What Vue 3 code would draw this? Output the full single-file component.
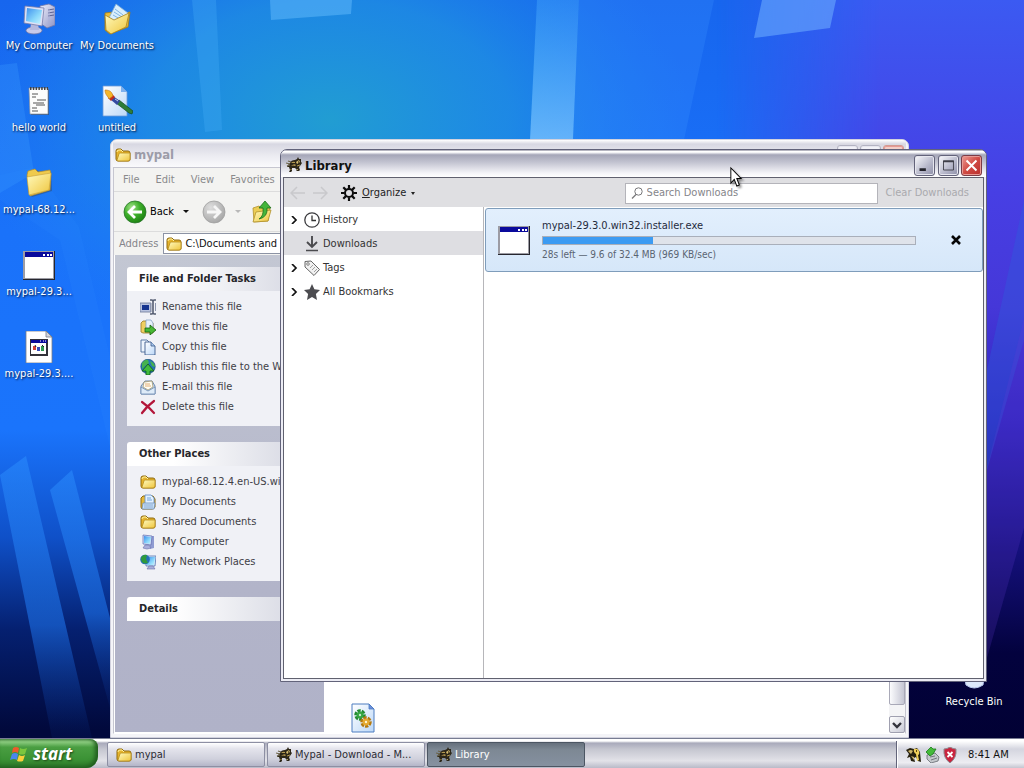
<script setup>
const desktopItems = [
  { label: 'My Computer', icon: 'computer' },
  { label: 'hello world', icon: 'notepad' },
  { label: 'mypal-68.12...', icon: 'folder-big' },
  { label: 'mypal-29.3...', icon: 'program' },
  { label: 'mypal-29.3....', icon: 'installer' },
  { label: 'My Documents', icon: 'documents' },
  { label: 'untitled', icon: 'paint' },
]

const menus = ['File', 'Edit', 'View', 'Favorites']

const panels = [
  {
    title: 'File and Folder Tasks',
    links: [
      { label: 'Rename this file', icon: 'rename' },
      { label: 'Move this file', icon: 'move' },
      { label: 'Copy this file', icon: 'copy' },
      { label: 'Publish this file to the Web', icon: 'publish' },
      { label: 'E-mail this file', icon: 'mail' },
      { label: 'Delete this file', icon: 'delete' },
    ],
  },
  {
    title: 'Other Places',
    links: [
      { label: 'mypal-68.12.4.en-US.win32', icon: 'folder' },
      { label: 'My Documents', icon: 'folder-doc' },
      { label: 'Shared Documents', icon: 'folder' },
      { label: 'My Computer', icon: 'monitor' },
      { label: 'My Network Places', icon: 'network' },
    ],
  },
  { title: 'Details', links: [] },
]

const tree = [
  { label: 'History', icon: 'clock', open: true },
  { label: 'Downloads', icon: 'download', selected: true },
  { label: 'Tags', icon: 'tag', open: true },
  { label: 'All Bookmarks', icon: 'star', open: true },
]

const tasks = [
  { label: 'mypal', icon: 'folder' },
  { label: 'Mypal - Download - M...', icon: 'mypal' },
  { label: 'Library', icon: 'mypal', active: true },
]

const tray = ['tray-key', 'tray-eject', 'tray-shield']
</script>

<template>
  <svg class="defs" aria-hidden="true">
    <defs>
      <linearGradient id="gFolder" x1="0" y1="0" x2="1" y2="1">
        <stop offset="0" stop-color="#fffbc0" /><stop offset="1" stop-color="#efc53c" />
      </linearGradient>
      <linearGradient id="gScreen" x1="0" y1="0" x2="1" y2="1">
        <stop offset="0" stop-color="#3d8fee" /><stop offset=".6" stop-color="#8ad8fb" /><stop offset="1" stop-color="#c9f3ff" />
      </linearGradient>
      <linearGradient id="gCase" x1="0" y1="0" x2="1" y2="1">
        <stop offset="0" stop-color="#f0f0fc" /><stop offset="1" stop-color="#8d93c4" />
      </linearGradient>
      <linearGradient id="gPaper" x1="0" y1="0" x2="1" y2="1">
        <stop offset="0" stop-color="#ffffff" /><stop offset="1" stop-color="#bcd8f8" />
      </linearGradient>
      <radialGradient id="gGreen" cx=".35" cy=".3" r=".8">
        <stop offset="0" stop-color="#a5e38c" /><stop offset=".45" stop-color="#3fb02c" /><stop offset="1" stop-color="#167a0d" />
      </radialGradient>
      <radialGradient id="gGray" cx=".35" cy=".3" r=".8">
        <stop offset="0" stop-color="#dedede" /><stop offset="1" stop-color="#a2a2a2" />
      </radialGradient>
    </defs>

    <symbol id="computer" viewBox="0 0 32 32">
      <path d="M17 3l9-2 6 3v18l-8 3-7-5z" fill="url(#gCase)" stroke="#7378a8" stroke-width=".8" />
      <path d="M25 7l6-1M25 10l6-1M25 13l6-1" stroke="#5d6392" />
      <path d="M26 6v17" stroke="#a9aed8" stroke-width=".8" />
      <ellipse cx="11" cy="27.500" rx="8" ry="3.500" fill="#c9cbea" stroke="#7277a6" stroke-width=".8" />
      <path d="M8 21h7l1 6H7z" fill="#b5b9de" />
      <path d="M2 3l19 2-2 18L1 20z" fill="#dfe1f6" stroke="#777ca9" stroke-width=".8" />
      <path d="M4 5l15 2-2 14L3 18z" fill="url(#gScreen)" />
    </symbol>

    <symbol id="documents" viewBox="0 0 32 32">
      <path d="M4 10l8-1 2 3 15-3-2 15-18 7-5-4z" fill="#e9bd39" stroke="#a37c17" stroke-width=".8" />
      <path d="M15 1l12 9-6 12-13-7z" fill="#d9eefc" stroke="#7ba9d3" stroke-width=".8" />
      <path d="M14 6l8 6M13 9l8 5M12 12l7 4" stroke="#7fb4e4" />
      <path d="M4 12l9 5 15-7-3 14-15 7-5-4z" fill="url(#gFolder)" stroke="#a8811d" stroke-width=".8" />
    </symbol>

    <symbol id="notepad" viewBox="0 0 32 32">
      <path d="M8 4h18v26H8z" fill="#3c4355" opacity=".6" />
      <path d="M6 3h19v26H7z" fill="#fcfcfc" stroke="#8b8f98" stroke-width=".7" />
      <path d="M7 3.500h18" stroke="#444" stroke-width="3" stroke-dasharray="1.500 1.300" />
      <path d="M9 9h6M9 12h4M14 15h9M10 18h11M13 20h9M9 23h5M9 26h6" stroke="#555" stroke-width="1" />
    </symbol>

    <symbol id="paint" viewBox="0 0 32 32">
      <path d="M2 1h18l6 6v24H2z" fill="url(#gPaper)" stroke="#6d9bd8" stroke-width=".8" />
      <path d="M20 1v6h6z" fill="#7db0ee" />
      <path d="M18 15l14 11-1 3-3-1-13-10z" fill="#2e7d37" stroke="#174b1f" stroke-width=".7" />
      <path d="M12 11l7 5-3 4-7-6z" fill="#3449a0" />
      <path d="M14 14l3 2" stroke="#c3cdf0" />
      <path d="M10 8l4 4-4 4-3-3z" fill="#c22b20" />
      <path d="M4 5c5 0 7 2 8 6l-4 3c-1-3-4-4-4-9z" fill="#f5b62a" stroke="#c27316" stroke-width=".6" />
    </symbol>

    <symbol id="folder-big" viewBox="0 0 32 32">
      <path d="M5 6l9-3 3 3 11-1 1 19-20 6-4-5z" fill="#3b3e44" opacity=".4" />
      <path d="M4 8l1-4 7-2 3 3 12-2 1 4-1 16-20 6z" fill="#efca4d" stroke="#b48d27" stroke-width=".7" />
      <path d="M4 10l24-4-2 17-20 5z" fill="url(#gFolder)" stroke="#c6a03c" stroke-width=".6" />
    </symbol>

    <symbol id="program" viewBox="0 0 32 32">
      <path d="M0 2h32v29H0z" fill="#26262e" />
      <path d="M0 2h31v28H0z" fill="#9c9ca4" />
      <path d="M2 4h28v25H2z" fill="#fff" />
      <path d="M2 3h28v5H2z" fill="#0a0a9c" />
      <path d="M20 5h2v2h-2zM24 5h2v2h-2zM27 5h2v2h-2z" fill="#fff" />
    </symbol>

    <symbol id="installer" viewBox="0 0 32 32">
      <path d="M3 0h20l6 6v26H3z" fill="#fff" stroke="#777b86" stroke-width=".8" />
      <path d="M23 0v6h6z" fill="#d2d4dc" stroke="#777b86" stroke-width=".8" />
      <path d="M7 8h18v17H7z" fill="#32323a" />
      <path d="M8 12h15v11H8z" fill="#fff" />
      <path d="M8 9h16v3H8z" fill="#0a0a9c" />
      <path d="M17 10h1M20 10h1M22 10h1" stroke="#fff" />
      <path d="M10 15h3v4h-3z" fill="#d2403a" /><path d="M14 16h3v4h-3z" fill="#344ab8" /><path d="M18 15h3v5h-3z" fill="#2f9a54" />
      <path d="M12 14l1 2M19 14l2 2" stroke="#222" />
    </symbol>

    <symbol id="bin" viewBox="0 0 32 32">
      <path d="M4 4h24l-3 22q-9 6-17 0z" fill="#dce8fb" stroke="#b9c9ee" />
      <path d="M9 8l2 14M16 8v14M23 8l-2 14" stroke="#a4b7e4" />
    </symbol>

    <symbol id="folder" viewBox="0 0 16 16">
      <path d="M1 12V4q0-2 2-2h3l2 2h5q2 0 2 2v7q0 1-2 1H3q-2 0-2-2z" fill="#e5b32c" stroke="#8f6a0f" />
      <path d="M4 7q0-1 1-1h10v6q0 2-2 2H3q-1 0-1-1z" fill="url(#gFolder)" stroke="#b78d1c" stroke-width=".8" />
      <path d="M2 5q0-2 2-2h2l2 2" fill="none" stroke="#fff2a0" />
    </symbol>

    <symbol id="folder-doc" viewBox="0 0 16 16">
      <path d="M1 13V4l2-2h10l2 3v8q-1 2-3 2H3q-2 0-2-2z" fill="#e7b93a" stroke="#8f6a0f" />
      <path d="M5 1h6l3 3v7H5z" fill="#e3f1ff" stroke="#5a8cc8" stroke-width=".8" />
      <path d="M7 4h4M7 6h5" stroke="#72a5dc" />
      <path d="M3 9h12l-1 6H2z" fill="#c9e1fa" stroke="#6f8fb8" stroke-width=".8" />
      <path d="M4 11h9M4 13h9" stroke="#7e9fc6" stroke-width=".8" />
    </symbol>

    <symbol id="monitor" viewBox="0 0 16 16">
      <path d="M9 2h5v12l-4 1z" fill="#8f9bd2" />
      <path d="M3 1l9 1-1 9-8-1z" fill="#d4daf4" stroke="#5d6cb0" stroke-width=".7" />
      <path d="M4 2l7 1-1 7-6-1z" fill="url(#gScreen)" />
      <path d="M5 11h4l2 3-4 1-4-1z" fill="#a8aedb" stroke="#6a6fa8" stroke-width=".6" />
    </symbol>

    <symbol id="network" viewBox="0 0 16 16">
      <path d="M6 2h10l-1 10H6z" fill="#d7ecfb" stroke="#3f5fa8" stroke-width=".7" />
      <path d="M7 3h8l-1 8H7z" fill="url(#gScreen)" />
      <circle cx="5" cy="5.500" r="4.800" fill="#2470b8" />
      <path d="M1 4q2-4 6-3l-1 4 2 4q-7 2-7-5z" fill="#2f9a3c" />
      <path d="M9 12h4l2 3H7z" fill="#a8aedb" stroke="#6a6fa8" stroke-width=".6" />
    </symbol>

    <symbol id="rename" viewBox="0 0 16 16">
      <path d="M0 4h11v9H0z" fill="#b9c3df" stroke="#6b7796" stroke-width=".8" />
      <path d="M2 6h7v5H2z" fill="#16348f" />
      <path d="M10 1h2l1 1 1-1h2M10 15h2l1-1 1 1h2M13 2v12" fill="none" stroke="#555d72" stroke-width="1.600" />
      <path d="M10.500 4v8M15.500 4v8" stroke="#8c95ae" stroke-width="1" />
    </symbol>

    <symbol id="move" viewBox="0 0 16 16">
      <path d="M1 13V4l2-2h4l1 2h5v10H3z" fill="#efcf61" stroke="#9a7a24" stroke-width=".8" />
      <path d="M6 1h5l2 3v6H6z" fill="#e7f1fb" stroke="#7d9cc4" stroke-width=".7" />
      <path d="M5 9h5V6l6 5-6 5v-3H5z" fill="#48b835" stroke="#14620f" stroke-width=".8" />
    </symbol>

    <symbol id="copy" viewBox="0 0 16 16">
      <path d="M1 1h6l3 3v9H1z" fill="#eef5fd" stroke="#4f6f9c" stroke-width=".9" />
      <path d="M5 3h6l4 4v9H5z" fill="url(#gPaper)" stroke="#3c5c8c" stroke-width=".9" />
      <path d="M11 3v4h4" fill="#a5c4ea" stroke="#3c5c8c" stroke-width=".8" />
    </symbol>

    <symbol id="publish" viewBox="0 0 16 16">
      <circle cx="8" cy="7.500" r="7.200" fill="#2576b4" stroke="#154a7c" stroke-width=".7" />
      <path d="M2 4q3-4 6-3l1 3-4 3-3 3zM10 2q5 2 5 6l-3-1z" fill="#46b24e" />
      <path d="M8 5l6 7h-4v4H6v-4H2z" fill="#42bb3b" stroke="#0e5a17" stroke-width=".8" />
    </symbol>

    <symbol id="mail" viewBox="0 0 16 16">
      <path d="M1 7l4-5h7l3 5v8H1z" fill="#c8dcf2" stroke="#5f7ea6" stroke-width=".9" />
      <path d="M4 3l8-1 1 6-5 3-5-3z" fill="#fffdf2" stroke="#9c8e5e" stroke-width=".7" />
      <path d="M5 5h5M5 7h6" stroke="#d99b57" stroke-width=".8" />
      <path d="M1 8l7 4 7-4v7H1z" fill="#deebf8" stroke="#6a89b0" stroke-width=".8" />
    </symbol>

    <symbol id="delete" viewBox="0 0 16 16">
      <path d="M2 3q6 4 12 11M14 2Q7 7 2 14" fill="none" stroke="#b3163a" stroke-width="2.200" stroke-linecap="round" />
    </symbol>

    <symbol id="back" viewBox="0 0 24 24">
      <circle cx="12" cy="12" r="11" fill="url(#gGreen)" stroke="#28752a" stroke-width=".8" />
      <path d="M12 6l-6 6 6 6M6 12h13" fill="none" stroke="#fff" stroke-width="2.800" />
    </symbol>
    <symbol id="forward" viewBox="0 0 24 24">
      <circle cx="12" cy="12" r="11" fill="url(#gGray)" stroke="#a0a0a0" stroke-width=".8" />
      <path d="M12 6l6 6-6 6M18 12H5" fill="none" stroke="#f6f6f6" stroke-width="2.800" />
    </symbol>
    <symbol id="up" viewBox="0 0 20 24">
      <path d="M1 8l6-2 2 2 9-1-2 14-14 1z" fill="#eccd54" stroke="#b1922c" stroke-width=".8" />
      <path d="M1 22L4 12l15-2-3 11z" fill="url(#gFolder)" stroke="#b1922c" stroke-width=".8" />
      <path d="M7 19q5-3 4-11H7l6-7 6 7h-4q1 9-8 11z" fill="#45b53b" stroke="#1a6e19" stroke-width=".8" />
    </symbol>

    <symbol id="mypal" viewBox="0 0 16 16">
      <path d="M4 6q1-3 5-3l2-1 1-2 1 2 2 0 0 3 1 1-2 3-1 1 1 3-1 1h-3l1-1-2-2-3 0 0 3-1 1H3l1-2-1-3-2 0 1-2z" fill="#2c2617" />
      <path d="M2 4l3 1M0 6l4 1M1 9l3-1" stroke="#6b6248" stroke-width="1.200" />
      <path d="M5 6q2-2 4-1l0 1zM5 9q3-3 5-1l-1 1q-2-1-4 0z" fill="#b59a50" />
      <path d="M10 5l3-2 1 2-3 2z" fill="#d5bb6d" />
      <path d="M11 9l3-1M5 12l0 1M11 12l1 1" stroke="#b59a50" />
      <path d="M12 5h1" stroke="#000" />
    </symbol>

    <symbol id="gear" viewBox="0 0 16 16">
      <circle cx="8" cy="8" r="4" fill="none" stroke="#0c0c0c" stroke-width="2" />
      <path d="M8 0v3.500M8 12.500V16M0 8h3.500M12.500 8H16M2.300 2.300l2.600 2.600M11.100 11.100l2.600 2.600M13.700 2.300l-2.600 2.600M4.900 11.100l-2.600 2.600" stroke="#0c0c0c" stroke-width="2.200" />
    </symbol>

    <symbol id="clock" viewBox="0 0 16 16">
      <circle cx="8" cy="8" r="7.200" fill="#fff" stroke="#3d3d40" stroke-width="1.300" />
      <path d="M8 3.500V8.500h4" fill="none" stroke="#333" stroke-width="1.300" />
    </symbol>
    <symbol id="download" viewBox="0 0 16 16">
      <path d="M8 0v11M3 6l5 5 5-5" fill="none" stroke="#4a4a4e" stroke-width="1.900" />
      <path d="M2 14.500h12" stroke="#4a4a4e" stroke-width="1.400" />
    </symbol>
    <symbol id="tag" viewBox="0 0 16 16">
      <path d="M1 1.500l6-.5 8.500 8.500-5.500 6L1 7z" fill="#f1f1f1" stroke="#666" stroke-width="1" stroke-linejoin="round" />
      <circle cx="4" cy="4" r="1.300" fill="#fff" stroke="#666" stroke-width=".8" />
      <path d="M6 8l3-3M8 10l3-3M10 12l3-3" stroke="#999" stroke-width=".9" />
    </symbol>
    <symbol id="star" viewBox="0 0 16 16">
      <path d="M8 0l2.400 5.300 5.600.7-4.100 4 1.100 6L8 13l-5 3 1.100-6L0 6l5.600-.7z" fill="#4c4c50" />
    </symbol>

    <symbol id="dll" viewBox="0 0 24 30">
      <path d="M1 1h17l5 5v23H1z" fill="url(#gPaper)" stroke="#4d7cc0" />
      <path d="M18 1v5h5z" fill="#6c8fdc" stroke="#4d7cc0" stroke-width=".8" />
      <circle cx="9" cy="12" r="4" fill="none" stroke="#238a32" stroke-width="3.500" stroke-dasharray="3 1" />
      <circle cx="9" cy="12" r="3.500" fill="#35a541" /><circle cx="9" cy="12" r="1.200" fill="#c8eacd" />
      <circle cx="15" cy="19" r="4" fill="none" stroke="#b5790e" stroke-width="3.500" stroke-dasharray="3 1" />
      <circle cx="15" cy="19" r="3.500" fill="#e5a92f" /><circle cx="15" cy="19" r="1.200" fill="#fff4d0" />
    </symbol>

    <symbol id="flag" viewBox="0 0 18 18">
      <path d="M3 3q3-2 6 0L8 8Q5 6 2 8z" fill="#ee5a2c" />
      <path d="M10 3q3 2 7 0l-2 6q-3 1-6 0z" fill="#7cc63e" />
      <path d="M2 9q3-2 6 0l-1 6q-3-2-7 0z" fill="#4a86ee" />
      <path d="M9 10q3 2 6 0l-2 6q-3 1-6 0z" fill="#fbcf3a" />
    </symbol>

    <symbol id="tray-key" viewBox="0 0 16 16">
      <path d="M0 3l4-2 4 1 3-1 3 4 1 10-3-1-2-4-2 1 1 4-4-1-1-4-3 1 2-4z" fill="#26200f" />
      <path d="M8 2q4-1 5 2t-1 4l1 5-2 1-1-7q-3-2-2-5z" fill="#f0cf58" />
      <path d="M2 4q3-2 5 0L5 7zM5 9l3 1v3z" fill="#cbb46a" />
      <path d="M10 3h1v2h-1z" fill="#5c4510" />
    </symbol>
    <symbol id="tray-eject" viewBox="0 0 16 16">
      <path d="M3 8l8-2 4 4-1 4-7 2-4-4z" fill="#c4c8cc" stroke="#63686e" stroke-width=".8" />
      <path d="M6 10l5-1M7 13l6-2" stroke="#73797f" />
      <path d="M2 5l5-5 2 2 3 0-3 5-3 2z" fill="#44bb3a" stroke="#1b7a1b" stroke-width=".8" />
    </symbol>
    <symbol id="tray-shield" viewBox="0 0 16 16">
      <path d="M8 0q3 2 6 2 1 9-6 14Q1 11 2 2q3 0 6-2z" fill="#c9243e" stroke="#8f8a90" />
      <path d="M5.500 5l5 5M10.500 5l-5 5" stroke="#fff" stroke-width="1.800" />
    </symbol>
  </svg>

  <div class="screen">
    <main class="desktop">
      <svg class="wallpaper" viewBox="0 0 1024 768" preserveAspectRatio="none" aria-hidden="true">
        <defs>
          <linearGradient id="wBase" x1="0" y1="0" x2="0" y2="1">
            <stop offset="0" stop-color="#1766ee" /><stop offset=".3" stop-color="#1a72fa" />
            <stop offset=".56" stop-color="#1a74fc" /><stop offset=".7" stop-color="#0f50c8" />
            <stop offset=".82" stop-color="#052070" /><stop offset=".95" stop-color="#01093c" />
          </linearGradient>
          <radialGradient id="wTeal"><stop offset="0" stop-color="#219dd2" /><stop offset=".5" stop-color="#1f92e0" stop-opacity=".75" /><stop offset="1" stop-color="#1c82ee" stop-opacity="0" /></radialGradient>
          <linearGradient id="wRight" x1="0" y1="0" x2="0" y2="1">
            <stop offset="0" stop-color="#3b5af2" /><stop offset=".25" stop-color="#473fe4" />
            <stop offset=".4" stop-color="#4537d8" /><stop offset=".55" stop-color="#3026c0" />
            <stop offset=".7" stop-color="#171284" /><stop offset=".85" stop-color="#03023e" /><stop offset="1" stop-color="#010130" />
          </linearGradient>
          <linearGradient id="wMask" x1="0" y1="0" x2="1" y2="0">
            <stop offset=".7" stop-color="#000" /><stop offset=".86" stop-color="#fff" />
          </linearGradient>
          <mask id="rightMask"><rect width="1024" height="768" fill="url(#wMask)" /></mask>
          <linearGradient id="wBeam" x1="0" y1="0" x2="0" y2="1">
            <stop offset="0" stop-color="#4db1ff" stop-opacity=".35" /><stop offset="1" stop-color="#7cc4ff" stop-opacity=".75" />
          </linearGradient>
          <linearGradient id="wLow" x1="0" y1="0" x2="0" y2="1">
            <stop offset="0" stop-color="#2d90ff" stop-opacity=".5" /><stop offset=".6" stop-color="#1d72ea" stop-opacity=".6" /><stop offset="1" stop-color="#0c3a9c" stop-opacity=".1" />
          </linearGradient>
        </defs>
        <rect width="1024" height="768" fill="url(#wBase)" />
        <ellipse cx="330" cy="120" rx="360" ry="240" fill="url(#wTeal)" />
        <rect width="1024" height="768" fill="url(#wRight)" mask="url(#rightMask)" />
        <path d="M0 65l17-2 17 110-34 20z" fill="#3b9bff" opacity=".3" />
        <path d="M0 175l34-8 45 60 31 130v90L60 240 0 200z" fill="#2f8dff" opacity=".15" />
        <path d="M192 0h24l6 130-17 2z" fill="#49b0fa" opacity=".3" />
        <path d="M270 0h82l-1 14-80 6z" fill="#6cc0ff" opacity=".45" />
        <path d="M537 0h42l-6 140h-43z" fill="url(#wBeam)" />
        <path d="M579 0h135l-30 140h-111z" fill="#3b92ff" opacity=".25" />
        <path d="M762 0h74l-6 28-76 10z" fill="#71b0ff" opacity=".55" />
        <path d="M1024 200l-37 170v100l37-130z" fill="#2b62dc" opacity=".35" />
        <path d="M1024 318l-37 150v190l37-130z" fill="#6a3cd8" opacity=".2" />
        <path d="M0 475l26-19 66 282H52z" fill="url(#wLow)" />
        <path d="M50 490l22-20 38 148v90z" fill="url(#wLow)" />
      </svg>

      <div class="shortcuts">
        <button v-for="item in desktopItems" :key="item.label" class="shortcut" type="button">
          <svg class="icon32"><use :href="'#' + item.icon" /></svg>
          <span>{{ item.label }}</span>
        </button>
      </div>
      <button class="shortcut recycle" type="button">
        <svg class="icon32"><use href="#bin" /></svg>
        <span>Recycle Bin</span>
      </button>

      <section class="window explorer" aria-label="mypal">
        <header class="titlebar">
          <svg class="icon16"><use href="#folder" /></svg>
          <h2>mypal</h2>
          <div class="controls">
            <button type="button" aria-label="Minimize folder"></button>
            <button type="button" aria-label="Maximize folder"></button>
            <button type="button" class="close" aria-label="Close folder"></button>
          </div>
        </header>
        <div class="explorer-body">
          <nav class="menubar">
            <button v-for="m in menus" :key="m" type="button">{{ m }}</button>
          </nav>
          <div class="toolbar">
            <button type="button" class="tool"><svg class="icon24"><use href="#back" /></svg>Back</button>
            <span class="caret"></span>
            <button type="button" class="tool next" aria-label="Forward"><svg class="icon24"><use href="#forward" /></svg></button>
            <span class="caret dim"></span>
            <button type="button" class="tool upper" aria-label="Up"><svg class="icon-up"><use href="#up" /></svg></button>
          </div>
          <div class="address">
            <label for="address">Address</label>
            <div class="address-box">
              <svg class="icon16"><use href="#folder" /></svg>
              <input id="address" type="text" value="C:\Documents and Settings\mypal" />
            </div>
          </div>
          <div class="explorer-main">
            <aside class="taskpane">
              <section v-for="p in panels" :key="p.title" class="panel">
                <h3>{{ p.title }}</h3>
                <ul v-if="p.links.length">
                  <li v-for="l in p.links" :key="l.label">
                    <a href="#"><svg class="icon16"><use :href="'#' + l.icon" /></svg><span>{{ l.label }}</span></a>
                  </li>
                </ul>
              </section>
            </aside>
            <div class="files"><svg class="icon-file"><use href="#dll" /></svg></div>
            <div class="scrollbar">
              <div class="thumb"></div>
              <button type="button" aria-label="Scroll down">
                <svg viewBox="0 0 10 10"><path d="M1 3l4 4 4-4" fill="none" stroke="#33333c" stroke-width="2.400" /></svg>
              </button>
            </div>
          </div>
        </div>
      </section>

      <section class="window library" aria-label="Library">
        <header class="titlebar">
          <svg class="icon16"><use href="#mypal" /></svg>
          <h2>Library</h2>
          <div class="controls">
            <button type="button" aria-label="Minimize">
              <svg viewBox="0 0 21 21"><path d="M5 15h7" stroke="#24242c" stroke-width="3" /></svg>
            </button>
            <button type="button" aria-label="Maximize">
              <svg viewBox="0 0 21 21"><path d="M5 5.500h11v10H5z" fill="none" stroke="#3e3e48" /><path d="M4.500 6h12" stroke="#3e3e48" stroke-width="2" /></svg>
            </button>
            <button type="button" class="close" aria-label="Close">
              <svg viewBox="0 0 21 21"><path d="M5 5l11 11M16 5L5 16" stroke="#fff" stroke-width="2.200" /></svg>
            </button>
          </div>
        </header>
        <div class="library-body">
          <div class="libbar">
            <button type="button" class="arrow" aria-label="Go back">
              <svg viewBox="0 0 16 14"><path d="M7 1L1 7l6 6M1 7h14" fill="none" stroke="#c9c9cc" stroke-width="1.500" /></svg>
            </button>
            <button type="button" class="arrow" aria-label="Go forward">
              <svg viewBox="0 0 16 14"><path d="M9 1l6 6-6 6M15 7H1" fill="none" stroke="#c9c9cc" stroke-width="1.500" /></svg>
            </button>
            <button type="button" class="organize">
              <svg class="icon16"><use href="#gear" /></svg>
              <span><u>O</u>rganize</span>
              <i class="drop"></i>
            </button>
            <div class="search">
              <svg viewBox="0 0 12 12"><circle cx="7.500" cy="4.500" r="3.700" fill="none" stroke="#77777a" /><path d="M5 7.500L1 11.500" stroke="#77777a" stroke-width="1.200" /></svg>
              <input type="search" placeholder="Search Downloads" aria-label="Search Downloads" />
            </div>
            <button type="button" class="clear">Clear Downloads</button>
          </div>
          <div class="library-main">
            <nav class="tree">
              <button v-for="n in tree" :key="n.label" type="button" :class="{ selected: n.selected }">
                <svg class="twisty" viewBox="0 0 8 8"><path v-if="n.open" d="M2 0l4 4-4 4" fill="none" stroke="#111" stroke-width="1.700" /></svg>
                <svg class="icon16"><use :href="'#' + n.icon" /></svg>
                <span>{{ n.label }}</span>
              </button>
            </nav>
            <div class="downloads">
              <article class="item">
                <svg class="icon32"><use href="#program" /></svg>
                <div class="info">
                  <span class="name">mypal-29.3.0.win32.installer.exe</span>
                  <progress max="324" value="96" aria-label="Download progress"></progress>
                  <span class="status">28s left — 9.6 of 32.4 MB (969 KB/sec)</span>
                </div>
                <button type="button" class="cancel" aria-label="Cancel download">
                  <svg viewBox="0 0 10 10"><path d="M1 1l8 8M9 1L1 9" stroke="#060606" stroke-width="2.600" /></svg>
                </button>
              </article>
            </div>
          </div>
        </div>
      </section>

      <svg class="cursor" viewBox="0 0 12 21" aria-hidden="true">
        <path d="M1 1v16l4-4 3 7 3-1-3-7h5z" transform="scale(.85 .95)" fill="#fff" stroke="#000" stroke-width="1.100" />
      </svg>
    </main>

    <footer class="taskbar">
      <button type="button" class="start"><svg><use href="#flag" /></svg>start</button>
      <button v-for="t in tasks" :key="t.label" type="button" class="task" :class="{ active: t.active }">
        <svg class="icon16"><use :href="'#' + t.icon" /></svg><span>{{ t.label }}</span>
      </button>
      <div class="tray">
        <svg v-for="t in tray" :key="t" class="icon16"><use :href="'#' + t" /></svg>
        <time>8:41 AM</time>
      </div>
    </footer>
  </div>
</template>

<style>
body { margin: 0; overflow: hidden; }
</style>

<style scoped>
.screen, .screen * { box-sizing: border-box; }
.screen {
  display: flex;
  flex-direction: column;
  height: 100vh;
  font: 11px/16px "DejaVu Sans Condensed", "Noto Sans", sans-serif;
  color: #111;
}
button, input { font: inherit; color: inherit; border: 0; background: none; padding: 0; margin: 0; }
svg { display: block; flex: none; }
.defs { position: absolute; width: 0; height: 0; }
h2, h3, ul { margin: 0; padding: 0; }
.icon16 { width: 16px; height: 16px; }
.icon24 { width: 24px; height: 24px; }
.icon32 { width: 32px; height: 32px; }

/* Desktop */
.desktop { position: relative; flex: 1; min-height: 0; overflow: hidden; background: #03104c; }
.wallpaper { position: absolute; top: 0; left: 0; width: 100%; height: 100vh; }
.shortcuts {
  position: relative;
  display: grid;
  grid-auto-flow: column;
  grid-template-rows: repeat(5, 82px);
  grid-auto-columns: 78px;
}
.shortcut {
  display: flex;
  flex-direction: column;
  align-items: center;
  gap: 3px;
  padding-top: 3px;
  color: #fff;
  text-shadow: 1px 1px 2px #00102f;
  white-space: nowrap;
}
.recycle { position: absolute; right: 11px; bottom: 28px; width: 78px; }

/* Window frames */
.window {
  position: absolute;
  display: flex;
  flex-direction: column;
  border-radius: 7px 7px 0 0;
  overflow: hidden;
}
.titlebar { display: flex; align-items: center; flex: none; height: 27px; }
.titlebar h2 { flex: 1; padding-top: 1px; font-size: 13px; font-weight: bold; }
.controls { display: flex; gap: 2px; }
.controls button {
  width: 21px;
  height: 21px;
  border: 1px solid #63637a;
  border-radius: 3px;
  background: linear-gradient(135deg, #fafafd, #b4b5c8 60%, #8e90a8);
  box-shadow: inset 0 0 0 1px #e6e6ee;
}
.controls button svg { width: 19px; height: 19px; }
.controls .close { background: linear-gradient(135deg, #ee9d95, #d04a43 50%, #b82f2e); box-shadow: inset 0 0 0 1px #e79a94; border-color: #7c3c46; }

/* Folder window */
.explorer {
  top: 139px;
  left: 110px;
  right: 115px;
  bottom: 0;
  border: 1px solid #d2d2de;
  background: #f4f4f8;
  padding: 0 2px 3px;
}
.explorer .titlebar { padding: 2px 2px 0 2px; gap: 3px; background: linear-gradient(#fff, #d8d8e2 15%, #ececf2 60%, #fafafc); color: #9c9ca8; }
.explorer .controls { align-self: start; padding-top: 3px; }
.explorer .controls button { border-color: #b3b3c2; background: #f2f2f8; }
.explorer .controls .close { border-color: #d29a92; background: #f3cfc8; }
.explorer-body { display: flex; flex-direction: column; flex: 1; min-height: 0; border: 1px solid #c6c6d0; border-bottom-color: #fff; background: #f3f3f1; }
.menubar { display: flex; gap: 16px; height: 24px; padding: 1px 0 0 9px; color: #8a8a8c; border-bottom: 1px solid #dcdcdc; }
.toolbar { display: flex; align-items: center; height: 40px; padding-left: 9px; border-bottom: 1px solid #dcdcdc; }
.tool { display: flex; align-items: center; gap: 3px; color: #000; }
.next { margin-left: 13px; }
.upper { margin-left: 11px; }
.icon-up { width: 20px; height: 24px; }
.caret { margin-left: 9px; border: 3px solid transparent; border-top-color: #111; border-bottom: 0; }
.dim { border-top-color: #b8b8b8; }
.address { display: flex; align-items: center; gap: 5px; height: 23px; padding-left: 5px; color: #85858a; }
.address-box { display: flex; align-items: center; gap: 3px; flex: 1; height: 21px; padding-left: 2px; border: 1px solid #8c93a4; background: #fff; }
.address-box input { flex: 1; min-width: 0; color: #111; }
.explorer-main { display: flex; flex: 1; min-height: 0; }
.taskpane {
  display: flex;
  flex-direction: column;
  gap: 16px;
  width: 210px;
  padding: 12px 12px 0;
  border: 1px solid #fff;
  border-width: 0 0 1px 1px;
  background: linear-gradient(#c3c7d3, #b2b4c9 70%, #b0b2c8);
}
.panel h3 { height: 24px; padding-left: 12px; border-radius: 3px 3px 0 0; font-size: 11px; line-height: 24px; color: #26262a; background: linear-gradient(90deg, #fff 25%, #d3d5e0); }
.panel ul { list-style: none; padding: 6px 0 9px 13px; background: #f0f1f6; }
.panel a { display: flex; align-items: center; gap: 6px; height: 20px; color: #404046; text-decoration: none; white-space: nowrap; overflow: hidden; }
.files { display: flex; flex: 1; align-items: flex-end; padding-left: 27px; background: #fff; }
.icon-file { width: 24px; height: 30px; }
.scrollbar { display: flex; flex-direction: column; justify-content: flex-end; width: 16px; background: #f4f4f6; }
.thumb { flex: 1; margin-bottom: 11px; border: 1px solid #a9a9b8; border-radius: 2px; background: linear-gradient(90deg, #fbfbfd, #c5c6d3); }
.scrollbar button { display: grid; place-items: center; width: 16px; height: 17px; border: 1px solid #a0a0b0; border-radius: 2px; background: linear-gradient(135deg, #fff, #c9cad6); }
.scrollbar button svg { width: 10px; height: 10px; }

/* Library window */
.library {
  top: 149px;
  left: 280px;
  right: 37px;
  bottom: 56px;
  border: 1px solid #62637a;
  background: #ececf4;
  padding: 0 2px 2px;
}
.library .titlebar { margin: 0 -2px; padding: 3px 4px 0 5px; gap: 3px; background: linear-gradient(#8b8b9c, #fff 5%, #fff 8%, #a5a6b8 18%, #c2c3d0 45%, #f4f4f8 85%, #fff); }
.library .controls { gap: 3px; }
.library .controls .close { margin-left: -1px; }
.library-body { display: flex; flex-direction: column; flex: 1; min-height: 0; border: 1px solid #60616f; background: #fff; }
.libbar { display: flex; align-items: center; flex: none; height: 29px; padding: 1px 14px 0 6px; background: #dfdfe2; }
.arrow { width: 16px; height: 14px; margin-right: 6px; }
.arrow svg { width: 16px; height: 14px; }
.organize { display: flex; align-items: center; gap: 5px; margin-left: 7px; color: #222; }
.drop { border: 2px solid transparent; border-top: 3px solid #222; border-bottom: 0; }
.search { display: flex; align-items: center; gap: 4px; width: 253px; height: 21px; margin-left: auto; padding-left: 5px; border: 1px solid #b4b4ba; background: #fff; }
.search svg { width: 12px; height: 12px; }
.search input { flex: 1; min-width: 0; outline: 0; }
.search input::placeholder { color: #85858a; opacity: 1; }
.clear { margin-left: 8px; color: #aaaaae; white-space: nowrap; }
.library-main { display: flex; flex: 1; min-height: 0; }
.tree { width: 200px; flex: none; border-right: 1px solid #b6b6ba; }
.tree button { display: flex; align-items: center; width: 100%; height: 24px; padding: 1px 0 0 6px; color: #333; }
.tree span { padding-top: 1px; }
.tree .twisty { width: 8px; height: 8px; margin-right: 6px; }
.tree .icon16 { margin-right: 3px; }
.tree .selected { background: #dedee2; }
.downloads { flex: 1; min-width: 0; padding: 1px 0 0 1px; }
.item { display: flex; align-items: center; height: 64px; padding-left: 12px; border: 1px solid #7f9dbb; border-radius: 3px; background: linear-gradient(#e2effd, #d6e7f9); }
.info { display: flex; flex-direction: column; flex: 1; min-width: 0; margin-left: 12px; }
.name { color: #1f2b3c; }
progress { display: block; appearance: none; width: 100%; height: 9px; margin: 2px 0; border: 1px solid #a9afba; background: #dfe3ea; }
progress::-webkit-progress-bar { background: #dfe3ea; }
progress::-webkit-progress-value { background: #3c9bf2; }
.status { font-size: 10px; color: #5a6472; }
.cancel { display: grid; place-items: center; width: 66px; height: 32px; padding-left: 14px; }
.cancel svg { width: 10px; height: 10px; }

.cursor { position: absolute; left: 730px; top: 167px; width: 12px; height: 21px; overflow: visible; filter: drop-shadow(2px 2px 1px rgba(0, 0, 0, .4)); }

/* Taskbar */
.taskbar {
  display: flex;
  align-items: center;
  flex: none;
  gap: 2px;
  height: 30px;
  padding-top: 2px;
  border-top: 1px solid #777c92;
  background: linear-gradient(#fff 7%, #a9aabb 14%, #c5c6d0 35%, #e2e2e8 75%, #b9bac8);
}
.start {
  display: flex;
  align-items: center;
  gap: 5px;
  align-self: stretch;
  width: 98px;
  margin: -2px 7px 0 0;
  padding-left: 10px;
  border-radius: 0 8px 12px 0;
  background: linear-gradient(#5f9b58, #8ccc80 10%, #4a9e42 28%, #3b9235 70%, #2c7528);
  box-shadow: inset -3px -1px 4px #1f5c1d;
  color: #fff;
  font: italic bold 17px/24px "Noto Sans", sans-serif;
  text-shadow: 1px 1px 2px #1d4a18;
}
.start svg { width: 18px; height: 18px; }
.task {
  display: flex;
  align-items: center;
  gap: 3px;
  width: 158px;
  height: 25px;
  padding-left: 8px;
  border: 1px solid #8d8fa3;
  border-radius: 2px;
  background: linear-gradient(#fff, #e4e4ec 25%, #cfd0dc 70%, #b4b6c8);
  color: #2c2c34;
  white-space: nowrap;
}
.active { border-color: #4c5663; background: linear-gradient(#66707d, #7d8894 30%, #8691a0); color: #fff; }
.tray {
  display: flex;
  align-items: center;
  gap: 2px;
  align-self: stretch;
  width: 128px;
  margin-left: auto;
  padding-left: 9px;
  border-left: 1px solid #62647a;
  box-shadow: inset 1px 0 #fff;
  background: linear-gradient(#fff, #d4d5df 30%, #ededf2 80%, #c4c5d0);
}
.tray time { margin-left: 8px; }
</style>
